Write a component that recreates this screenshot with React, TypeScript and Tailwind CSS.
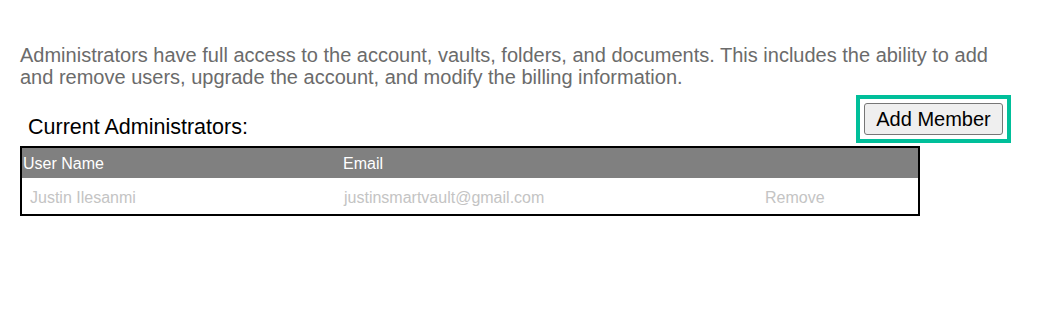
export default function App() {
  return (
    <div className="w-[1043px] h-[317px] bg-white pt-[44px] pl-[20px] pr-[40px] font-['Liberation_Sans',Arial,sans-serif]">
      <p className="text-[20px] leading-[22px] text-[#6b6b6b]">
        Administrators have full access to the account, vaults, folders, and documents. This includes the ability to add and remove users, upgrade the account, and modify the billing information.
      </p>
      <div className="mt-[15px] h-[43px] flex items-start justify-between">
        <h2 className="ml-[8px] mt-[12px] text-[21.5px] leading-[24px] text-black font-normal">
          Current Administrators:
        </h2>
        <div className="-mt-[8px] -mr-[8px] border-4 border-[#00bf9a] p-[4px]">
          <button className="block w-[139px] h-[32px] bg-[#efefef] border border-[#767676] rounded-[3px] text-[20px] leading-none text-black">
            Add Member
          </button>
        </div>
      </div>
      <div className="w-[900px] border-2 border-black">
        <div className="h-[30px] pt-[2px] bg-[#808080] grid grid-cols-[321px_422px_1fr] items-center text-[16px] text-white">
          <div className="pl-[1px]">User Name</div>
          <div>Email</div>
          <div></div>
        </div>
        <div className="h-[36px] pt-[3px] grid grid-cols-[321px_422px_1fr] items-center text-[16px] text-[#c4c4c4]">
          <div className="pl-[8px]">Justin Ilesanmi</div>
          <div className="pl-[1px]">justinsmartvault@gmail.com</div>
          <div>Remove</div>
        </div>
      </div>
    </div>
  );
}
